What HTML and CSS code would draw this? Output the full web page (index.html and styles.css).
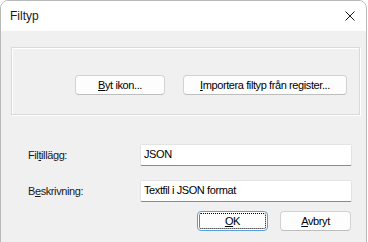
FILE: index.html
```html
<!DOCTYPE html>
<html lang="sv">
<head>
    <meta charset="UTF-8">
    <title>Filtyp</title>
    <link rel="stylesheet" href="styles.css">
</head>
<body>
    <div class="window">
        <!-- Title bar -->
        <div class="titlebar">
            <span class="title">Filtyp</span>
            <svg class="close" width="10" height="10" viewBox="0 0 10 10">
                <path d="M0.5 0.5 L9.5 9.5 M9.5 0.5 L0.5 9.5" stroke="#1a1a1a" stroke-width="1" fill="none"/>
            </svg>
        </div>
        <div class="content">
            <div class="group">
                <button class="btn btn-icon"><u>B</u>yt ikon...</button>
                <button class="btn btn-import"><u>I</u>mportera filtyp från register...</button>
            </div>
            <div class="form">
                <label>Fil<u>t</u>illägg:</label>
                <div class="field">JSON</div>
                <label>B<u>e</u>skrivning:</label>
                <div class="field">Textfil i JSON format</div>
            </div>
            <div class="actions">
                <button class="btn btn-ok"><u>O</u>K</button>
                <button class="btn btn-cancel"><u>A</u>vbryt</button>
            </div>
        </div>
    </div>
</body>
</html>
```

FILE: styles.css
```css
* {
    margin: 0;
    padding: 0;
    box-sizing: border-box;
}

body {
    font-family: "Liberation Sans", Arial, sans-serif;
    font-size: 11px;
    letter-spacing: -0.4px;
    color: #000;
    background: #fff;
}

.window {
    width: 367px;
    height: 250px;
    border: 1px solid #b9b9b9;
    border-radius: 8px 8px 0 0;
    overflow: hidden;
    background: #f0f0f0;
}

.titlebar {
    height: 30px;
    background: #fff;
    display: flex;
    align-items: center;
    justify-content: space-between;
    padding: 0 10px 0 9px;
}
.title {
    font-size: 12px;
    letter-spacing: 0;
    color: #1a1a1a;
}
.close {
    margin-right: 1px;
}

.content {
    padding: 16px 6px 0 10px;
}

/* Group box with the two buttons */
.group {
    height: 68px;
    border: 1px solid #d9d9d9;
    box-shadow: inset 1px 1px 0 #fff, 1px 1px 0 #fff;
    display: flex;
    gap: 18px;
    padding: 27px 0 0 63px;
}

.btn {
    font-family: inherit;
    font-size: 11px;
    letter-spacing: inherit;
    height: 20px;
    background: #fdfdfd;
    border: 1px solid #d2d2d2;
    border-bottom-color: #bdbdbd;
    border-radius: 4px;
    color: #000;
}
.btn-icon {
    width: 90px;
}
.btn-import {
    width: 164px;
}

.form {
    display: grid;
    grid-template-columns: 112px 212px;
    row-gap: 14px;
    align-items: center;
    margin-top: 29px;
    padding-left: 17px;
}
.form label {
    color: #1a1a1a;
}
.field {
    height: 22px;
    background: #fff;
    border: 1px solid #e3e3e3;
    border-bottom: 1px solid #8a8a8a;
    border-radius: 2px;
    padding: 3px 3px;
}

.actions {
    display: flex;
    gap: 12px;
    margin-top: 9px;
    padding-left: 186px;
}
.btn-ok,
.btn-cancel {
    width: 71px;
}
.btn-ok {
    border: 1px solid #5a9fe0;
    outline: 1px dotted #000;
    outline-offset: -3px;
}
```
